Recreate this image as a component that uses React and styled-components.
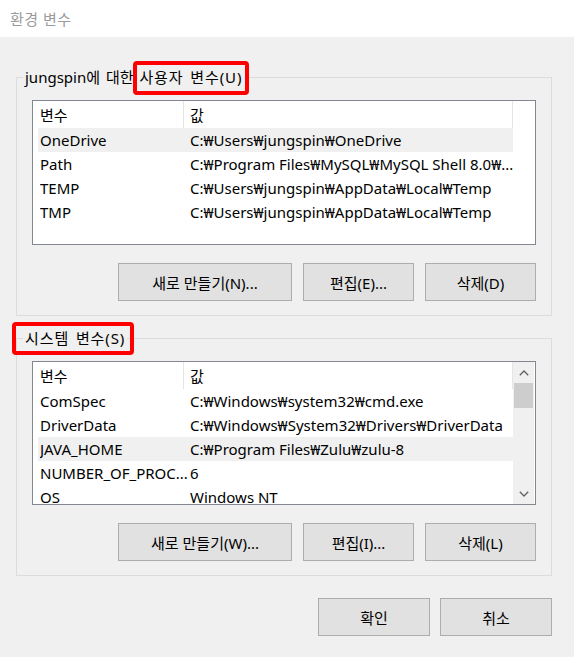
import React from 'react'
import styled, { createGlobalStyle } from 'styled-components'

const userVars = [
    { name: 'OneDrive', value: 'C:₩Users₩jungspin₩OneDrive', hl: true },
    { name: 'Path', value: 'C:₩Program Files₩MySQL₩MySQL Shell 8.0₩...' },
    { name: 'TEMP', value: 'C:₩Users₩jungspin₩AppData₩Local₩Temp' },
    { name: 'TMP', value: 'C:₩Users₩jungspin₩AppData₩Local₩Temp' },
]

const systemVars = [
    { name: 'ComSpec', value: 'C:₩Windows₩system32₩cmd.exe' },
    { name: 'DriverData', value: 'C:₩Windows₩System32₩Drivers₩DriverData' },
    { name: 'JAVA_HOME', value: 'C:₩Program Files₩Zulu₩zulu-8', hl: true },
    { name: 'NUMBER_OF_PROC...', value: '6' },
    { name: 'OS', value: 'Windows NT' },
]

const Arrow = ({ down }) => (
    <svg width="10" height="6" viewBox="0 0 10 6">
        <polyline
            points={down ? '0.8,0.8 5,5 9.2,0.8' : '0.8,5.2 5,1 9.2,5.2'}
            fill="none" stroke="#606060" strokeWidth="1.3"
        />
    </svg>
)

const VarList = ({ rows, scroll, height }) => (
    <ListBox $h={height}>
        <ListMain>
            <Header>
                <HeaderCell $w={151} $pad={7}>변수</HeaderCell>
                <HeaderCell $w={329} $pad={6}>값</HeaderCell>
            </Header>
            <Rows>
                {rows.map((r) => (
                    <Row key={r.name} $hl={r.hl}>
                        <Cell>{r.name}</Cell>
                        <Cell>{r.value}</Cell>
                    </Row>
                ))}
            </Rows>
        </ListMain>
        {scroll && (
            <ScrollBar>
                <ScrollBtn><Arrow /></ScrollBtn>
                <Thumb />
                <Track />
                <ScrollBtn><Arrow down /></ScrollBtn>
            </ScrollBar>
        )}
    </ListBox>
)

const App = () => {
    return (
        <Window>
            <GlobalStyle />
            <TitleBar>환경 변수</TitleBar>
            <Body>
                <Group>
                    <Legend>
                        jungspin에 대한 <Mark $box="-6px -7px -8px -6px">사용자 변수(U)</Mark>
                    </Legend>
                    <Content>
                        <VarList rows={userVars} height={145} />
                        <ButtonRow>
                            <Button $w={174}>새로 만들기(N)...</Button>
                            <Button $w={111}>편집(E)...</Button>
                            <Button $w={111}>삭제(D)</Button>
                        </ButtonRow>
                    </Content>
                </Group>
                <Group>
                    <Legend>
                        <Mark $box="-6px -9px -7px -13px">시스템 변수(S)</Mark>
                    </Legend>
                    <Content>
                        <VarList rows={systemVars} height={144} scroll />
                        <ButtonRow>
                            <Button $w={174}>새로 만들기(W)...</Button>
                            <Button $w={111}>편집(I)...</Button>
                            <Button $w={111}>삭제(L)</Button>
                        </ButtonRow>
                    </Content>
                </Group>
                <Footer>
                    <Button $w={112}>확인</Button>
                    <Button $w={112}>취소</Button>
                </Footer>
            </Body>
        </Window>
    )
}

export default App

const GlobalStyle = createGlobalStyle`
html, body, #root {
    margin: 0;
    height: 100%;
}
body {
    background: #f0f0f0;
    color: #000;
    font-family: "Noto Sans", "Noto Sans CJK KR", sans-serif;
    font-size: 15px;
}
`
const Window = styled.div`
display: flex;
flex-direction: column;
width: 574px;
height: 657px;
background: #f0f0f0;
overflow: hidden;
`
const TitleBar = styled.div`
display: flex;
align-items: center;
height: 37px;
padding-left: 10px;
background: #fff;
color: #9a9a9a;
font-size: 15px;
letter-spacing: 0.5px;
`
const Body = styled.div`
display: flex;
flex-direction: column;
padding: 30px 22px 0 16px;
`
const Group = styled.fieldset`
margin: 0;
padding: 0;
min-width: 0;
border: 1px solid #dcdcdc;
& + & {
    margin-top: 12px;
}
`
const Legend = styled.legend`
margin-left: 6px;
padding: 0 2px;
line-height: 20px;
white-space: nowrap;
word-spacing: 2px;
`
const Mark = styled.span`
position: relative;
letter-spacing: 0.9px;
&::after {
    content: '';
    position: absolute;
    inset: ${(p) => p.$box};
    border: 4px solid #ff0000;
    border-radius: 4px;
}
`
const Content = styled.div`
display: flex;
flex-direction: column;
gap: 18px;
padding: 13px 15px 14px;
`
const ListBox = styled.div`
display: flex;
box-sizing: border-box;
height: ${(p) => p.$h}px;
border: 1px solid #828790;
background: #fff;
`
const ListMain = styled.div`
flex: 1;
min-width: 0;
overflow: hidden;
`
const Header = styled.div`
display: flex;
height: 27px;
`
const HeaderCell = styled.div`
display: flex;
align-items: center;
box-sizing: border-box;
width: ${(p) => p.$w}px;
padding-left: ${(p) => p.$pad}px;
border-right: 1px solid #e5e5e5;
`
const Rows = styled.div`
width: 475px;
margin-left: 5px;
`
const Row = styled.div`
display: grid;
grid-template-columns: 150px 1fr;
align-items: center;
height: 24px;
padding-left: 2px;
background: ${(p) => (p.$hl ? '#f0f0f0' : 'transparent')};
`
const Cell = styled.div`
white-space: nowrap;
overflow: hidden;
`
const ScrollBar = styled.div`
display: flex;
flex-direction: column;
width: 21px;
margin-right: 1px;
background: #f0f0f0;
`
const ScrollBtn = styled.div`
display: flex;
align-items: center;
justify-content: center;
height: 21px;
`
const Thumb = styled.div`
height: 25px;
margin: 0 1px;
background: #cdcdcd;
`
const Track = styled.div`
flex: 1;
`
const ButtonRow = styled.div`
display: flex;
justify-content: flex-end;
gap: 11px;
`
const Footer = styled.div`
display: flex;
justify-content: flex-end;
gap: 10px;
margin-top: 22px;
`
const Button = styled.button`
box-sizing: border-box;
width: ${(p) => p.$w}px;
height: 38px;
padding: 0;
border: 1px solid #adadad;
background: #e1e1e1;
color: #000;
font-family: inherit;
font-size: 15px;
`
